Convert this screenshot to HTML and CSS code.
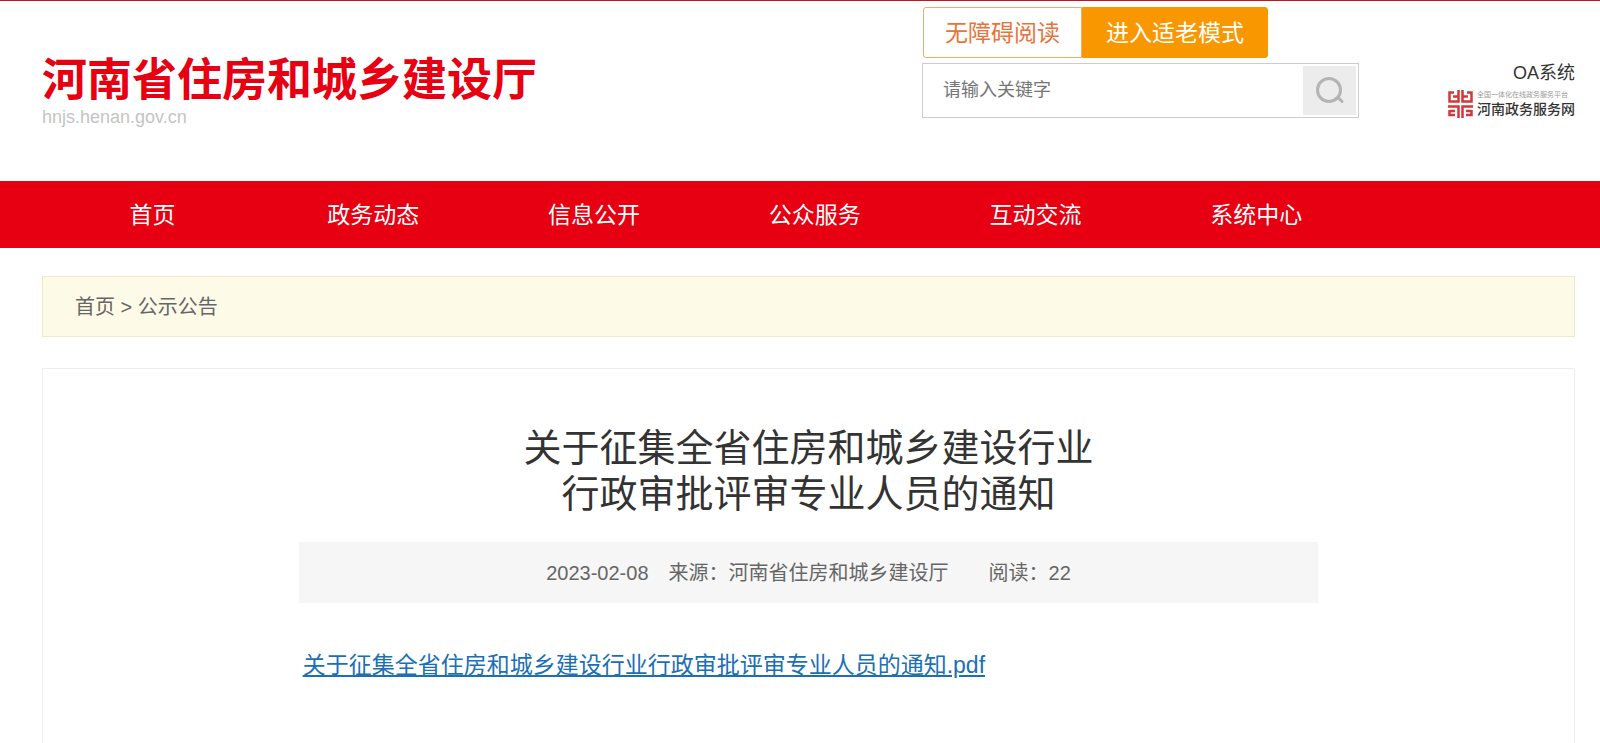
FILE: index.html
```html
<!DOCTYPE html>
<html lang="zh-CN">
<head>
  <meta charset="UTF-8" />
  <title>关于征集全省住房和城乡建设行业行政审批评审专业人员的通知</title>
  <link rel="stylesheet" href="styles.css">
</head>
<body>
  <header class="header">
    <div class="brand">
      <a class="brand-name" href="#">河南省住房和城乡建设厅</a>
      <span class="brand-url">hnjs.henan.gov.cn</span>
    </div>

    <div class="tools">
      <div class="modes">
        <button type="button" class="mode-btn">无障碍阅读</button>
        <button type="button" class="mode-btn mode-elder">进入适老模式</button>
      </div>
      <form class="search" onsubmit="return false">
        <input type="text" class="search-input" placeholder="请输入关键字" aria-label="请输入关键字" />
        <button type="submit" class="search-btn" aria-label="搜索">
          <svg width="30" height="30" viewBox="0 0 30 30" fill="none" stroke="#b4b4b4" stroke-width="3">
            <circle cx="14" cy="14" r="11.500" />
            <path d="M21 22.500l2.500-.5 3.500 3.500" stroke-linecap="round" />
          </svg>
        </button>
      </form>
    </div>

    <div class="side">
      <a class="oa-link" href="#">OA系统</a>
      <a class="service" href="#">
        <svg width="25" height="28" viewBox="0 0 25 28" fill="none" stroke="#d5363b" stroke-width="2.500">
          <path d="M6 2.500H1.500V11.500H10.500V0M5 6.500H10" />
          <path d="M19 2.500H23.500V11.500H14.500V0M20 6.500H15" />
          <path d="M0 16.500H10.500V28M1.500 20V25H7M1.500 21H7" />
          <path d="M25 16.500H14.500V28M23.500 20V25H18M23.500 21H18" />
        </svg>
        <span class="service-text">
          <span class="service-small">全国一体化在线政务服务平台</span>
          <span class="service-name">河南政务服务网</span>
        </span>
      </a>
    </div>
  </header>

  <nav class="nav">
    <a href="#">首页</a>
    <a href="#">政务动态</a>
    <a href="#">信息公开</a>
    <a href="#">公众服务</a>
    <a href="#">互动交流</a>
    <a href="#">系统中心</a>
  </nav>

  <div class="crumb">
    <a href="#">首页</a> &gt; <a href="#">公示公告</a>
  </div>

  <main class="article">
    <h1>关于征集全省住房和城乡建设行业<br>行政审批评审专业人员的通知</h1>
    <div class="meta">
      <span>2023-02-08</span>
      <span>来源：河南省住房和城乡建设厅</span>
      <span class="reads">阅读：22</span>
    </div>
    <div class="content">
      <a href="#">关于征集全省住房和城乡建设行业行政审批评审专业人员的通知.pdf</a>
    </div>
  </main>
</body>
</html>
```
FILE: styles.css
```css
* {
  box-sizing: border-box;
}
body {
  margin: 0;
  min-height: 100vh;
  display: flex;
  flex-direction: column;
  font-family: "Liberation Sans", "Noto Sans CJK SC", sans-serif;
  color: #333;
  background: #fff;
}
a {
  color: inherit;
  text-decoration: none;
}
button, input {
  font-family: inherit;
}

/* header */
.header {
  display: flex;
  height: 181px;
  padding: 0 25px 0 42px;
  border-top: 1px solid #c4161c;
}
.brand {
  flex: 1;
  padding-top: 54px;
}
.brand-name {
  display: block;
  font-size: 45px;
  line-height: 52px;
  font-weight: bold;
  color: #e60012;
}
.brand-url {
  display: block;
  font-size: 18px;
  line-height: 20px;
  color: #c4c4c4;
}
.tools {
  width: 437px;
  margin-right: 89px;
  padding-top: 6px;
}
.modes {
  display: flex;
  padding-left: 1px;
  margin-bottom: 5px;
}
.mode-btn {
  height: 51px;
  padding: 0 21px 4px;
  border: 1px solid #ecae6c;
  border-radius: 3px 0 0 3px;
  background: #fff;
  color: #e8743b;
  font-size: 23px;
  cursor: pointer;
}
.mode-elder {
  padding: 0 23px 4px;
  border-color: #f99700;
  border-radius: 0 3px 3px 0;
  background: #f99700;
  color: #fff;
}
.search {
  display: flex;
  height: 55px;
  padding: 2px;
  border: 1px solid #ccc;
}
.search-input {
  flex: 1;
  min-width: 0;
  padding: 0 18px;
  border: 0;
  outline: 0;
  font-size: 18px;
}
.search-input::placeholder {
  color: #757575;
}
.search-btn {
  display: flex;
  align-items: center;
  justify-content: center;
  width: 53px;
  padding: 0;
  border: 0;
  background: #ececec;
  cursor: pointer;
}
.side {
  display: flex;
  flex-direction: column;
  align-items: flex-end;
  padding-top: 59px;
}
.oa-link {
  font-size: 18px;
  line-height: 26px;
}
.service {
  display: flex;
  gap: 4px;
  margin-top: 4px;
}
.service-text {
  display: flex;
  flex-direction: column;
}
.service-small {
  font-size: 7px;
  line-height: 10px;
  color: #999;
}
.service-name {
  font-size: 14px;
  line-height: 18px;
  font-weight: 500;
}

/* nav */
.nav {
  display: flex;
  padding: 1px 25px 0 42px;
  background: #e60012;
}
.nav a {
  width: 14.4%;
  font-size: 23px;
  line-height: 66px;
  text-align: center;
  color: #fff;
}

.crumb {
  margin: 28px 25px 31px 42px;
  padding: 2px 32px 0;
  border: 1px solid #eeebc8;
  background: #fefae8;
  font-size: 20px;
  line-height: 57px;
  color: #666;
}

/* article */
.article {
  flex: 1;
  margin: 0 25px 0 42px;
  padding-top: 56px;
  border: 1px solid #eee;
  border-bottom: 0;
}
.article h1 {
  margin: 0;
  font-size: 38px;
  line-height: 46px;
  font-weight: normal;
  text-align: center;
}
.meta {
  display: flex;
  justify-content: center;
  gap: 20px;
  width: 66.6%;
  margin: 25px auto 0;
  padding-top: 2px;
  background: #f6f6f6;
  font-size: 20px;
  line-height: 59px;
  color: #666;
}
.reads {
  margin-left: 20px;
}
.content {
  width: 66.6%;
  margin: 42px auto 0;
  padding: 0 4px;
  font-size: 23px;
  line-height: 40px;
}
.content a {
  color: #1a6fb5;
  text-decoration: underline;
}
```
